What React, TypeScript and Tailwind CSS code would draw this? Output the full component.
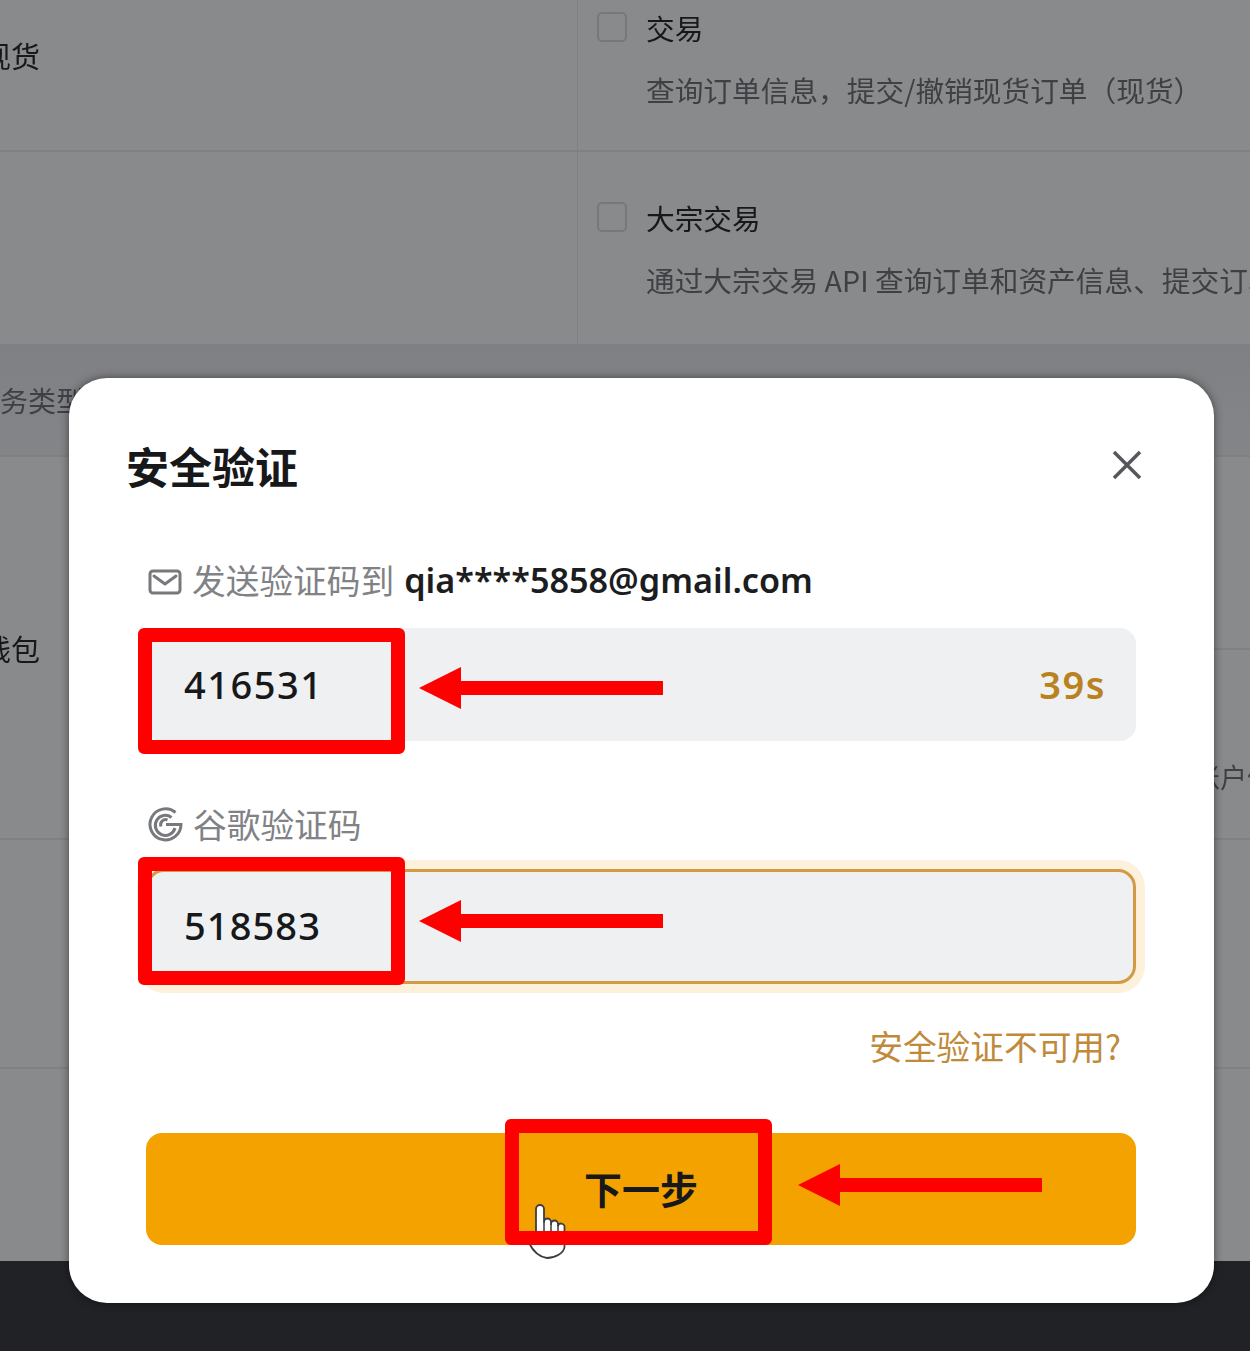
const ROW_LINE = 'border-b-2 border-[#7f8082]';

function Checkbox() {
  return <span className="mt-[12px] h-[30px] w-[30px] shrink-0 rounded-[5px] border-2 border-[#77787a]" />;
}

function PermissionCell({ title, desc }: { title: string; desc: string }) {
  return (
    <div className="flex gap-[19px] pl-[19px]">
      <Checkbox />
      <div className="min-w-0 whitespace-nowrap">
        <p className="mt-[7px] text-[28.700px] leading-[42px] text-[#17181a]">{title}</p>
        <p className="mt-[20px] text-[28.700px] leading-[42px] text-[#3f4043]">{desc}</p>
      </div>
    </div>
  );
}

function Background() {
  return (
    <div className="flex h-full flex-col overflow-hidden bg-[#898a8c] blur-[0.4px]">
      <div className={`grid h-[152px] shrink-0 grid-cols-[577px_1fr] ${ROW_LINE}`}>
        <div className="flex items-center pb-[38px]">
          <span className="-ml-[18px] text-[29px] text-[#17181a]">现货</span>
        </div>
        <div className="border-l border-[#7f8082]">
          <PermissionCell title="交易" desc="查询订单信息，提交/撤销现货订单（现货）" />
        </div>
      </div>
      <div className="grid h-[192px] shrink-0 grid-cols-[577px_1fr] overflow-hidden">
        <div />
        <div className="overflow-hidden border-l border-[#7f8082] pt-[38px]">
          <PermissionCell title="大宗交易" desc="通过大宗交易 API 查询订单和资产信息、提交订单" />
        </div>
      </div>
      <div className={`h-[113px] shrink-0 bg-gradient-to-b from-[#7f8083] to-[#848588] ${ROW_LINE}`}>
        <span className="-ml-[28px] block pt-[36px] text-[28px] leading-[40px] text-[#3f4043]">业务类型</span>
      </div>
      <div className={`grid h-[383px] shrink-0 grid-cols-[577px_1fr] ${ROW_LINE}`}>
        <div className="flex items-center">
          <span className="-ml-[18px] text-[29px] leading-[42px] text-[#17181a]">钱包</span>
        </div>
        <div className="flex flex-col overflow-hidden">
          <div className={`h-[193px] shrink-0 ${ROW_LINE}`} />
          <span className="pl-[616px] pt-[107px] text-[27px] leading-[40px] whitespace-nowrap text-[#3f4043]">账户信息</span>
        </div>
      </div>
      <div className={`h-[229px] shrink-0 ${ROW_LINE}`} />
      <div className="h-[192px] shrink-0" />
      <div className="flex-1 bg-[#202226]" />
    </div>
  );
}

function MailIcon() {
  return (
    <svg width="34" height="26" viewBox="0 0 34 26" fill="none" stroke="#77797d" strokeWidth="3" className="shrink-0">
      <rect x="2" y="2" width="30" height="22" rx="3" />
      <path d="M6 7l11 8 11-8" strokeLinecap="round" strokeLinejoin="round" />
    </svg>
  );
}

function GoogleIcon() {
  return (
    <svg width="35" height="35" viewBox="0 0 35 35" fill="none" stroke="#77797d" strokeWidth="3" className="shrink-0">
      <path d="M27.5 5.5A15.5 15.5 0 1 0 33 17.5H18" />
      <path d="M23.5 10.5A10 10 0 1 0 27 21" />
      <path d="M13 19.5a5 5 0 0 1 6.5-6.5" />
    </svg>
  );
}

function Annotations() {
  return (
    <>
      <div className="absolute left-[138px] top-[628px] h-[126px] w-[267px] rounded-[6px] border-[14px] border-[#ff0000]" />
      <div className="absolute left-[138px] top-[857px] h-[128px] w-[267px] rounded-[6px] border-[14px] border-[#ff0000]" />
      <div className="absolute left-[505px] top-[1119px] h-[126px] w-[267px] rounded-[6px] border-[14px] border-[#ff0000]" />
      <Arrow className="absolute left-[419px] top-[667px]" />
      <Arrow className="absolute left-[419px] top-[900px]" />
      <Arrow className="absolute left-[798px] top-[1164px]" />
    </>
  );
}

function Arrow({ className }: { className: string }) {
  return (
    <svg width="244" height="42" viewBox="0 0 244 42" className={className}>
      <path d="M0 21L42 0V14H244V28H42V42Z" fill="#ff0000" />
    </svg>
  );
}

function HandCursor() {
  return (
    <svg width="45" height="60" viewBox="0 0 45 60" className="absolute left-[525px] top-[1203px]">
      <path
        d="M11 6a4 4 0 0 1 8 0V19a3.5 3.5 0 0 1 7 0v2a3.5 3.5 0 0 1 7 0v1.5a3.5 3.5 0 0 1 6.500 .500V44C39 50 30 55 22 55C14 54 8 48 4 40L11 34Z"
        fill="#ffffff"
        stroke="#3c3d40"
        strokeWidth="1.8"
        strokeLinejoin="round"
      />
      <path d="M19 19v10M26 21v9M33 22v9" stroke="#3c3d40" strokeWidth="1.500" />
    </svg>
  );
}

export default function App() {
  return (
    <div className="relative h-[1351px] w-[1250px] overflow-hidden bg-white font-['Noto_Sans_CJK_SC','Noto_Sans',sans-serif]">
      <Background />

      {/* security verification dialog */}
      <div className="absolute left-[69px] top-[378px] h-[925px] w-[1145px] rounded-[38px] bg-white pl-[77px] pr-[78px] shadow-[0_0_8px_rgba(0,0,0,0.5)]">
        <div className="flex items-center justify-between pt-[59px]">
          <h2 className="-ml-[20px] pb-[6px] text-[43px] leading-[56px] font-bold text-[#17181a]">安全验证</h2>
          <svg width="30" height="30" viewBox="0 0 30 30" stroke="#55575b" strokeWidth="3.500" className="mr-[-6px] -translate-y-[3px]">
            <path d="M2 2l26 26M28 2L2 28" />
          </svg>
        </div>

        <div className="mt-[57px] flex h-[52px] items-center gap-[10px] pl-[2px]">
          <MailIcon />
          <span className="pb-[5px] text-[33.700px] leading-[52px] text-[#808286]">发送验证码到</span>
          <span className="pb-[5px] font-['Noto_Sans',sans-serif] text-[34.200px] leading-[52px] font-semibold text-[#1c1d20]">qia****5858@gmail.com</span>
        </div>

        <div className="mt-[20px] flex h-[113px] items-center justify-between rounded-[16px] bg-[#eff0f2] px-[38px] font-['Noto_Sans',sans-serif] text-[38px]">
          <span className="tracking-[1.500px] font-medium text-[#17181a]">416531</span>
          <span className="-mr-[8px] tracking-[1.500px] font-semibold text-[#b9821e]">39s</span>
        </div>

        <div className="mt-[57px] flex h-[52px] items-center gap-[10px] pl-[2px]">
          <GoogleIcon />
          <span className="text-[33.700px] leading-[52px] text-[#808286]">谷歌验证码</span>
        </div>

        <div className="mt-[19px] flex h-[115px] items-center rounded-[18px] border-[3px] border-[#d29a45] bg-[#eff0f2] px-[35px] font-['Noto_Sans',sans-serif] text-[38px] text-[#17181a] shadow-[0_0_0_9px_#fdf1dc]">
          <span className="pb-[2px] tracking-[1.100px] font-medium">518583</span>
        </div>

        <p className="mt-[37px] mb-[3px] pr-[15px] text-right text-[33.700px] leading-[50px] text-[#c08a3a]">安全验证不可用?</p>

        <button className="mt-[62px] block h-[112px] w-full rounded-[16px] bg-[#f4a200] pb-[4px] text-[38px] font-bold text-[#17181a]">
          下一步
        </button>
      </div>

      <HandCursor />
      <Annotations />
    </div>
  );
}
